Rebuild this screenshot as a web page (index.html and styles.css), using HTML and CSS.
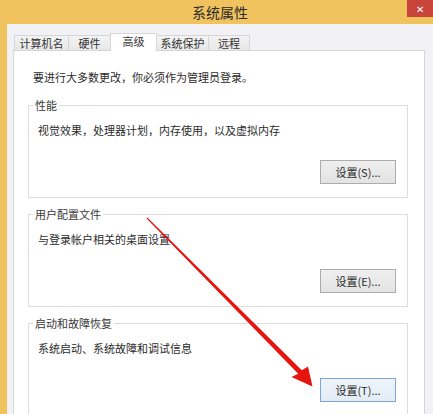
FILE: index.html
```html
<!DOCTYPE html>
<html lang="zh-CN">
<head>
    <meta charset="UTF-8">
    <meta name="viewport" content="width=device-width, initial-scale=1.0">
    <title>系统属性</title>
    <link rel="stylesheet" href="styles.css">
</head>
<body>
    <div class="window">
        <div class="titlebar">
            <span class="title">系统属性</span>
            <span class="close">&#x2715;</span>
        </div>
        <div class="frame">
            <div class="client">
                <div class="tabs">
                    <div class="tab w1">计算机名</div>
                    <div class="tab w2">硬件</div>
                    <div class="tab w3 active">高级</div>
                    <div class="tab w4">系统保护</div>
                    <div class="tab w5">远程</div>
                </div>
                <div class="panel">
                    <p class="intro">要进行大多数更改，你必须作为管理员登录。</p>

                    <fieldset class="group">
                        <legend>性能</legend>
                        <p class="desc">视觉效果，处理器计划，内存使用，以及虚拟内存</p>
                        <div class="actions"><button class="btn">设置(S)...</button></div>
                    </fieldset>

                    <fieldset class="group">
                        <legend>用户配置文件</legend>
                        <p class="desc">与登录帐户相关的桌面设置</p>
                        <div class="actions"><button class="btn">设置(E)...</button></div>
                    </fieldset>

                    <fieldset class="group">
                        <legend>启动和故障恢复</legend>
                        <p class="desc">系统启动、系统故障和调试信息</p>
                        <div class="actions"><button class="btn focus">设置(T)...</button></div>
                    </fieldset>
                </div>
            </div>
        </div>

        <!-- red annotation arrow drawn over the dialog -->
        <svg class="arrow" width="433" height="414" viewBox="0 0 433 414">
            <polygon points="147.4,217.6 301.8,370.2 308,366.5 312.5,386.5 291.5,377 298.2,373.8 146.6,218.4" fill="#e5140f"/>
        </svg>
    </div>
</body>
</html>
```

FILE: styles.css
```css
* {
    box-sizing: border-box;
}

body {
    margin: 0;
    font-family: "Noto Sans CJK SC", "Noto Sans", sans-serif;
    font-size: 11px;
    color: #2b2b2b;
    background: #f0f0f0;
}

.window {
    position: relative;
    width: 433px;
    height: 414px;
    overflow: hidden;
}

.titlebar {
    height: 24px;
    background-color: #f1c35f;
    display: flex;
    align-items: flex-start;
}

.titlebar .title {
    flex: 1;
    padding-left: 33px;
    text-align: center;
    line-height: 24px;
    font-size: 14px;
    color: #2a2a2a;
}

.titlebar .close {
    width: 26px;
    height: 17px;
    background-color: #c9453c;
    color: #fff;
    font-size: 10px;
    line-height: 17px;
    text-align: center;
}

.frame {
    height: 390px;
    border-left: 7px solid #f1c35f;
}

.client {
    height: 100%;
    background-color: #f2f1f5;
    padding: 9px 0 0 6px;
}

.tabs {
    display: flex;
    align-items: flex-end;
    height: 17px;
    padding-left: 1px;
}

.tab {
    height: 15px;
    border: 1px solid #d6d6d6;
    border-bottom: none;
    background: linear-gradient(#f3f3f3, #e8e8e8);
    text-align: center;
    line-height: 14px;
    color: #333;
    margin-right: -1px;
}

.tab.active {
    height: 18px;
    margin-bottom: -1px;
    background: #fff;
    line-height: 15px;
    position: relative;
    z-index: 1;
}

.w1 { width: 55px; }
.w2 { width: 43px; }
.w3 { width: 47px; }
.w4 { width: 53px; }
.w5 { width: 42px; }

.panel {
    width: 412px;
    height: 400px;
    background-color: #fff;
    border: 1px solid #d6d6d6;
    padding: 18px 16px 0 19px;
}

.intro {
    margin: 0;
    line-height: 16px;
}

.group {
    margin: 12px 0 0 -5px;
    padding: 9px 11px 13px 9px;
    border: 1px solid #dddddd;
    min-width: 0;
}

.group + .group {
    margin-top: 8px;
}

.group legend {
    margin-left: -5px;
    padding: 0 2px;
    line-height: 16px;
    color: #3a3a3a;
}

.desc {
    margin: 0;
    line-height: 16px;
}

.actions {
    display: flex;
    justify-content: flex-end;
    margin-top: 22px;
}

.btn {
    width: 76px;
    height: 24px;
    font-family: inherit;
    font-size: 11px;
    color: #2b2b2b;
    background: linear-gradient(#efefef, #e3e3e3);
    border: 1px solid #acacac;
    padding: 0;
}

.btn.focus {
    border-color: #7aa7d6;
    background: linear-gradient(#eef4fa, #e3ecf5);
}

.arrow {
    position: absolute;
    left: 0;
    top: 0;
    pointer-events: none;
}
```
